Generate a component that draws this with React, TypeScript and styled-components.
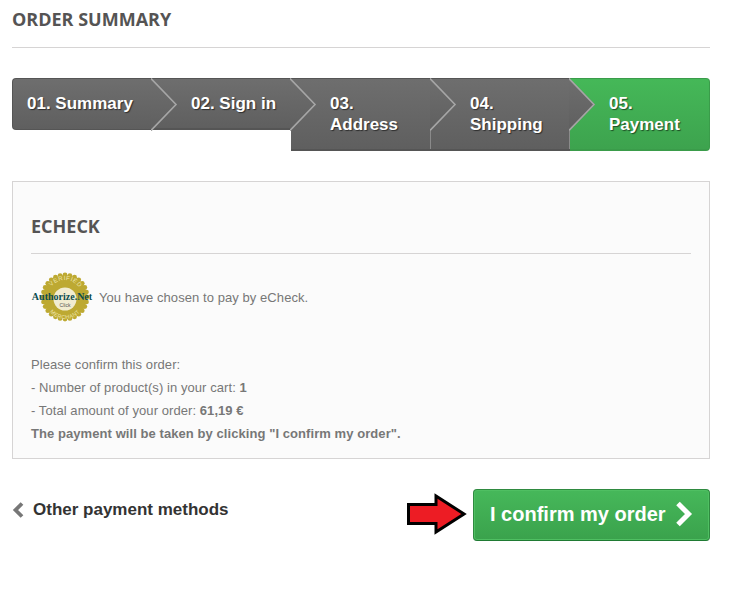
import React from "react";
import styled, { createGlobalStyle } from "styled-components";

const Global = createGlobalStyle`
  html, body { margin: 0; padding: 0; background: #fff; }
  body { font-family: "Liberation Sans", Arial, sans-serif; }
  * { box-sizing: border-box; }
`;

const Page = styled.div`
  width: 732px;
  height: 593px;
  padding: 8px 22px 0 12px;
  overflow: hidden;
`;

const PageHeading = styled.h1`
  margin: 0 0 30px;
  padding: 0 0 17px;
  font: 700 18px/22px "Open Sans", sans-serif;
  color: #555454;
  text-transform: uppercase;
  border-bottom: 1px solid #d6d4d4;
`;

const Steps = styled.ol`
  list-style: none;
  margin: 0 0 30px;
  padding: 0;
  display: grid;
  grid-template-columns: 140px 139px 140px 139px 140px;
  align-items: start;
`;

const Step = styled.li<{ $active?: boolean; $first?: boolean; $tall?: boolean }>`
  position: relative;
  height: ${(p) => (p.$tall ? 73 : 52)}px;
  padding: 14px 0 16px ${(p) => (p.$first ? 14 : 39)}px;
  font: 700 17px/21px "Liberation Sans", Arial, sans-serif;
  white-space: nowrap;
  color: #fff;
  text-shadow: 1px 1px 1px rgba(0, 0, 0, 0.55);
  background: ${(p) =>
    p.$active
      ? "linear-gradient(#45b858, #3da34e)"
      : "linear-gradient(#6e6e6e, #5f5f5f)"};
  border-style: solid;
  border-color: ${(p) => (p.$active ? "#3a9c4a" : "#555")};
  border-width: 1px 0 ${(p) => (p.$first ? 1 : 2)}px ${(p) => (p.$first ? 1 : 0)}px;
  border-radius: ${(p) => (p.$first ? "4px 0 0 4px" : p.$active ? "0 4px 4px 0" : "0")};
  ${(p) => p.$active && "border-right: 1px solid #3a9c4a;"}
  ${(p) => p.$tall && !p.$active && "box-shadow: inset -1px 0 0 #8a8a8a;"}
`;

const StepArrow = styled.svg`
  position: absolute;
  top: -1px;
  right: -26px;
  width: 27px;
  height: 53px;
  z-index: 1;
`;

const Panel = styled.section`
  height: 278px;
  margin-bottom: 30px;
  padding: 32px 18px 0;
  background: #fbfbfb;
  border: 1px solid #d6d4d4;
  font-size: 13px;
  line-height: 23px;
  letter-spacing: 0.07px;
  color: #777;
`;

const PanelHeading = styled.h2`
  margin: 0 0 18px;
  padding: 0 0 14px;
  font: 700 18px/25px "Open Sans", sans-serif;
  letter-spacing: 0;
  color: #555454;
  text-transform: uppercase;
  border-bottom: 1px solid #d6d4d4;
`;

const Chosen = styled.p`
  display: flex;
  align-items: center;
  gap: 6px;
  margin: 0 0 31px;
  height: 50px;
`;

const Line = styled.p`
  margin: 0;
  strong { font-weight: 700; }
`;

const Actions = styled.div`
  display: flex;
  justify-content: space-between;
  align-items: flex-start;
`;

const BackLink = styled.a`
  display: flex;
  align-items: center;
  gap: 9px;
  height: 40px;
  margin-top: 1px;
  font: 700 17px/20px "Liberation Sans", Arial, sans-serif;
  color: #333;
`;

const Confirm = styled.div`
  display: flex;
  align-items: center;
  gap: 5px;
`;

const ConfirmButton = styled.button`
  display: flex;
  align-items: center;
  gap: 8px;
  width: 237px;
  height: 52px;
  padding: 0 0 2px 16px;
  font: 700 20px/24px "Liberation Sans", Arial, sans-serif;
  color: #fff;
  background: linear-gradient(#46b85a, #3aa24c);
  border: 1px solid #2f8a40;
  border-bottom-color: #1f7a33;
  border-radius: 4px;
  box-shadow: inset 0 0 0 1px #4fbf62;
`;

const StepChevron = () => (
  <StepArrow viewBox="0 0 27 53">
    <defs>
      <linearGradient id="stepFill" x1="0" y1="0" x2="0" y2="1">
        <stop offset="0" stopColor="#6e6e6e" />
        <stop offset="1" stopColor="#5f5f5f" />
      </linearGradient>
    </defs>
    <path d="M0 0L26 26.5L0 53Z" fill="url(#stepFill)" />
    <path d="M0 .5L25 26.5L0 52.5" fill="none" stroke="#a6a6a6" strokeWidth="1.6" />
  </StepArrow>
);

const Seal = () => {
  const teeth = Array.from({ length: 28 }, (_, i) => {
    const a = (i / 28) * Math.PI * 2;
    return <circle key={i} cx={34 + 22 * Math.cos(a)} cy={25 + 22 * Math.sin(a)} r={2.4} fill="#bda932" />;
  });
  return (
    <svg width="62" height="50" viewBox="0 0 62 50" overflow="visible" aria-label="Authorize.Net verified merchant" style={{ flex: "none" }}>
      <defs>
        <path id="sealTop" d="M17 25a17 17 0 0 1 34 0" />
        <path id="sealBottom" d="M14 27a20 20 0 0 0 40 0" />
      </defs>
      {teeth}
      <circle cx="34" cy="25" r="22" fill="#bda932" />
      <circle cx="34" cy="27" r="11.5" fill="#f1ecd0" />
      <text fontSize="6" fill="#efe6ae" fontFamily="Liberation Sans, sans-serif" letterSpacing="0.6">
        <textPath href="#sealTop" startOffset="11">VERIFIED</textPath>
      </text>
      <text fontSize="5.5" fill="#efe6ae" fontFamily="Liberation Sans, sans-serif" letterSpacing="0.4">
        <textPath href="#sealBottom" startOffset="14">MERCHANT</textPath>
      </text>
      <text x="31" y="28" textAnchor="middle" fontSize="10" fontWeight="700" fontFamily="Liberation Serif, serif" letterSpacing="0" fill="#0c4d4f">Authorize.Net</text>
      <text x="34" y="35" textAnchor="middle" fontSize="5" fontFamily="Liberation Sans, sans-serif" letterSpacing="0" fill="#555">Click</text>
    </svg>
  );
};

export default function App() {
  return (
    <Page>
      <Global />
      <PageHeading>Order summary</PageHeading>
      <Steps>
        <Step $first>
          01. Summary
          <StepChevron />
        </Step>
        <Step>
          02. Sign in
          <StepChevron />
        </Step>
        <Step $tall>
          03.<br />Address
          <StepChevron />
        </Step>
        <Step $tall>
          04.<br />Shipping
          <StepChevron />
        </Step>
        <Step $tall $active>
          05.<br />Payment
        </Step>
      </Steps>
      <Panel>
        <PanelHeading>Echeck</PanelHeading>
        <Chosen>
          <Seal />
          You have chosen to pay by eCheck.
        </Chosen>
        <Line>Please confirm this order:</Line>
        <Line>- Number of product(s) in your cart: <strong>1</strong></Line>
        <Line>- Total amount of your order: <strong>61,19 €</strong></Line>
        <Line><strong>The payment will be taken by clicking "I confirm my order".</strong></Line>
      </Panel>
      <Actions>
        <BackLink>
          <svg width="12" height="16" viewBox="0 0 12 16" aria-hidden="true">
            <path d="M10 1.5L3.5 8L10 14.5" fill="none" stroke="#777" strokeWidth="3.8" />
          </svg>
          Other payment methods
        </BackLink>
        <Confirm>
          <svg width="62" height="46" viewBox="0 0 62 46" aria-hidden="true">
            <path d="M2.5 12.5H30V4L58 22L30 40V31.5H2.5Z" fill="#ed1c24" stroke="#000" strokeWidth="3" strokeLinejoin="miter" />
          </svg>
          <ConfirmButton>
            I confirm my order
            <svg width="19" height="26" viewBox="0 0 19 26" aria-hidden="true">
              <path d="M4 2.5L14.5 13L4 23.5" fill="none" stroke="#fff" strokeWidth="5" />
            </svg>
          </ConfirmButton>
        </Confirm>
      </Actions>
    </Page>
  );
}
